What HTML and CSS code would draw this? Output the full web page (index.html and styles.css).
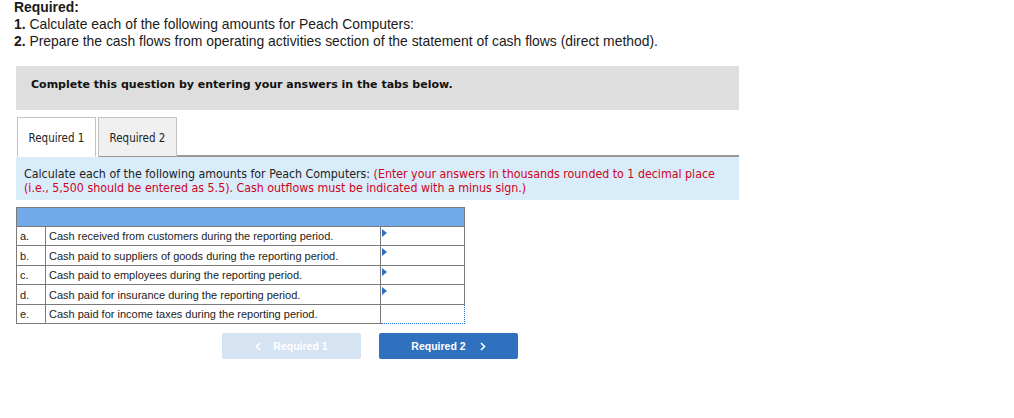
FILE: index.html
```html
<!DOCTYPE html>
<html>
<head>
<meta charset="utf-8">
<link rel="stylesheet" href="styles.css">
</head>
<body>
<div class="req">
  <div class="req-title">Required:</div>
  <div><b>1.</b> Calculate each of the following amounts for Peach Computers:</div>
  <div><b>2.</b> Prepare the cash flows from operating activities section of the statement of cash flows (direct method).</div>
</div>
<div class="notice">Complete this question by entering your answers in the tabs below.</div>
<div class="tabs">
  <div class="tab active">Required 1</div>
  <div class="tab">Required 2</div>
  <div class="tab-fill"></div>
</div>
<div class="info">Calculate each of the following amounts for Peach Computers: <span class="red">(Enter your answers in thousands rounded to 1 decimal place (i.e., 5,500 should be entered as 5.5). Cash outflows must be indicated with a minus sign.)</span></div>
<table class="grid">
  <tr class="head"><td colspan="3"></td></tr>
  <tr><td class="lbl">a.</td><td class="desc">Cash received from customers during the reporting period.</td><td class="inp"><span class="tri"></span></td></tr>
  <tr class="tall"><td class="lbl">b.</td><td class="desc">Cash paid to suppliers of goods during the reporting period.</td><td class="inp"><span class="tri"></span></td></tr>
  <tr><td class="lbl">c.</td><td class="desc">Cash paid to employees during the reporting period.</td><td class="inp"><span class="tri"></span></td></tr>
  <tr class="tall"><td class="lbl">d.</td><td class="desc">Cash paid for insurance during the reporting period.</td><td class="inp"><span class="tri"></span></td></tr>
  <tr><td class="lbl">e.</td><td class="desc">Cash paid for income taxes during the reporting period.</td><td class="inp focus"></td></tr>
</table>
<div class="nav">
  <div class="btn prev"><svg class="chev" width="6" height="9" viewBox="0 0 6 9"><path d="M5 1 L1.5 4.5 L5 8" fill="none" stroke="#fff" stroke-width="1.6"/></svg>Required 1</div>
  <div class="btn next">Required 2<svg class="chev" width="6" height="9" viewBox="0 0 6 9"><path d="M1 1 L4.5 4.5 L1 8" fill="none" stroke="#fff" stroke-width="1.6"/></svg></div>
</div>
</body>
</html>
```
FILE: styles.css
```css
html, body { margin: 0; padding: 0; background: #fff; }
body { padding: 0 14px; font-family: "Liberation Sans", Arial, sans-serif; color: #222; }
.req { font-size: 13.9px; line-height: 17px; color: #1a1a1a; margin-top: -1px; }
.req-title { font-weight: bold; }
.notice {
  margin: 16px 0 0 2px; width: 723px; height: 44px; box-sizing: border-box;
  background: #dedede; padding: 12px 15px; font-family: "DejaVu Sans", Verdana, sans-serif;
  font-size: 11px; font-weight: bold; line-height: 14px; color: #111;
}
.tabs { display: flex; margin: 7px 0 0 3px; width: 722px; }
.tab {
  width: 79px; height: 40px; box-sizing: border-box; border: 1px solid #c4c4c4;
  font-family: "DejaVu Sans Condensed", "DejaVu Sans", sans-serif; font-size: 11.5px; line-height: 40px; text-align: center; color: #222;
  background: #f0f0f0; margin-right: 2px; border-bottom: 1px solid #999;
}
.tab.active { background: #fff; border-bottom: 1px solid #fff; }
.tab-fill { flex: 1; border-bottom: 2px solid #999; margin-left: -2px; }
.info {
  margin: 0 0 0 2px; width: 723px; box-sizing: border-box; background: #d9ecfa;
  padding: 10px 8px 5px; font-family: "DejaVu Sans Condensed", "DejaVu Sans", sans-serif; font-size: 12.3px; line-height: 14px; color: #222;
}
.red { color: #d0021b; }
.grid {
  margin: 7px 0 0 2px; border-collapse: collapse; width: 449px;
  font-family: "Liberation Sans", Arial, sans-serif; font-size: 11px; color: #222;
}
.grid td { border: 1px solid #7a7a7a; height: 18px; padding: 0 3px; }
.grid tr.tall td { height: 19px; }
.grid tr.head td { background: #72a9e8; height: 18px; }
.lbl { width: 22px; }
.desc { width: 328px; }
.inp { position: relative; vertical-align: top; padding: 0; }
.tri { position: absolute; left: 1px; top: 2px; width: 0; height: 0; border-left: 5px solid #2f6fc1; border-top: 4px solid transparent; border-bottom: 4px solid transparent; }
.grid td.focus { border: 1px dotted #2a6fc9; }
.nav { display: flex; gap: 18px; margin: 9px 0 0 208px; }
.btn {
  width: 139px; height: 26px; border-radius: 2px; box-sizing: border-box;
  font-family: "Liberation Sans", Arial, sans-serif; font-size: 10.5px; font-weight: bold; color: #fff;
  display: flex; align-items: center; justify-content: center;
}
.btn.prev { background: #d6e3f3; }
.btn.next { background: #2f71bf; }
.prev .chev { margin-right: 12px; }
.next .chev { margin-left: 14px; }
```
